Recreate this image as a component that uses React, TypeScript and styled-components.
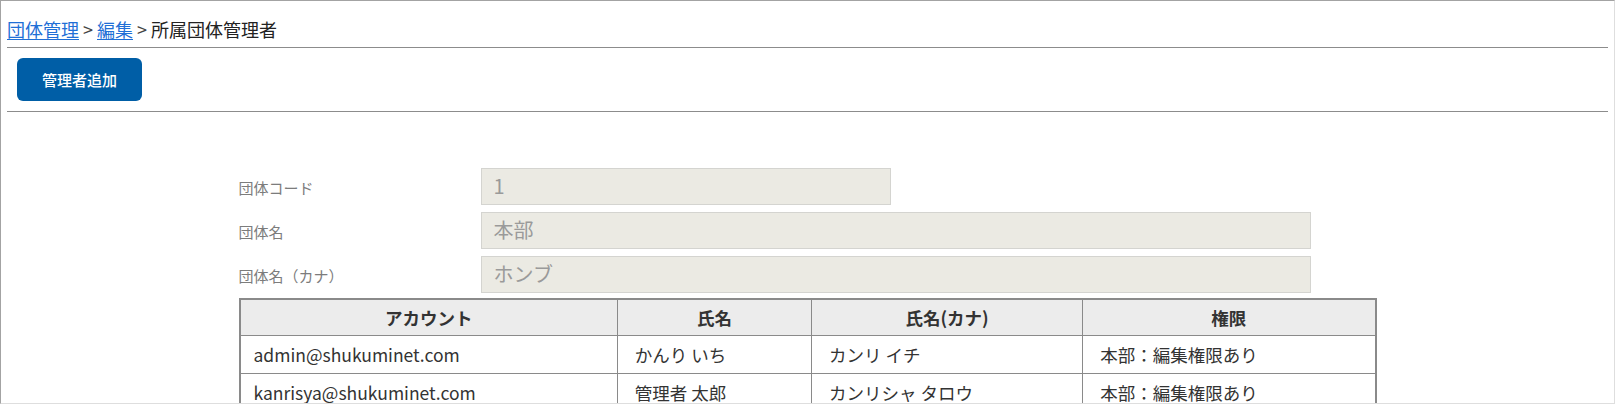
import styled, { createGlobalStyle } from "styled-components";

const GlobalStyle = createGlobalStyle`
    html, body {
        margin: 0;
        padding: 0;
        background: #ffffff;
    }
    body {
        font-family: "Noto Sans CJK JP", "Noto Sans", sans-serif;
        color: #333333;
    }
`;

const Frame = styled.div`
    box-sizing: border-box;
    width: 1615px;
    height: 404px;
    overflow: hidden;
    border-top: 1px solid #a3a3a3;
    border-left: 1px solid #a3a3a3;
    border-right: 1px solid #dedede;
    border-bottom: 1px solid #dedede;
    padding: 0 6px;
    display: flex;
    flex-direction: column;
`;

const Breadcrumb = styled.div`
    padding-top: 15px;
    padding-bottom: 5px;
    font-size: 18px;
    line-height: 26px;
    color: #222222;
    white-space: nowrap;
`;

const CrumbLink = styled.a`
    color: #1f6fd6;
    text-decoration: underline;
    text-underline-offset: 2px;
    cursor: pointer;
`;

const Separator = styled.span`
    margin: 0 4px;
    color: #444;
`;

const Toolbar = styled.div`
    border-top: 1px solid #8c8c8c;
    border-bottom: 1px solid #8c8c8c;
    padding: 10px 10px;
    display: flex;
    align-items: center;
`;

const Button = styled.button`
    box-sizing: border-box;
    width: 125px;
    height: 43px;
    border: none;
    border-radius: 6px;
    background-color: #005ea6;
    color: #ffffff;
    font-family: "Noto Sans CJK JP", sans-serif;
    font-size: 15px;
    font-weight: 500;
    cursor: pointer;
`;

const Content = styled.div`
    width: 1138px;
    margin: 56px auto 0;
    display: flex;
    flex-direction: column;
    gap: 7px;
`;

const FormRow = styled.div`
    display: grid;
    grid-template-columns: 242px 1fr;
    align-items: center;
`;

const Label = styled.label`
    font-size: 15px;
    color: #7c7c7c;
    padding-top: 2px;
`;

const Field = styled.div<{ $width: number }>`
    box-sizing: border-box;
    width: ${p => p.$width}px;
    height: 37px;
    background-color: #ebeae3;
    border: 1px solid #d4d4d0;
    padding: 0 12px 2px;
    display: flex;
    align-items: center;
    font-size: 20px;
    color: #9a9a9a;
`;

const Table = styled.table`
    margin-top: -2px;
    border-collapse: collapse;
    border: 2px solid #8a8a8a;
    table-layout: fixed;
`;

const Th = styled.th<{ $width: number }>`
    width: ${p => p.$width}px;
    height: 35px;
    background-color: #ececec;
    border: 1px solid #8a8a8a;
    font-size: 17.5px;
    font-weight: 700;
    color: #333;
    text-align: center;
    padding: 0;
`;

const Td = styled.td`
    height: 37px;
    border: 1px solid #8a8a8a;
    font-size: 17.5px;
    color: #333;
    padding: 0 17px;
    white-space: nowrap;

    &:first-child {
        padding-left: 13px;
    }
`;

const columns = [
    { title: "アカウント", width: 376 },
    { title: "氏名", width: 193 },
    { title: "氏名(カナ)", width: 270 },
    { title: "権限", width: 291 },
];

const admins = [
    ["admin@shukuminet.com", "かんり いち", "カンリ イチ", "本部：編集権限あり"],
    ["kanrisya@shukuminet.com", "管理者 太郎", "カンリシャ タロウ", "本部：編集権限あり"],
];

export default function App() {
    return (
        <>
            <GlobalStyle />
            <Frame>
                <Breadcrumb>
                    <CrumbLink>団体管理</CrumbLink>
                    <Separator>&gt;</Separator>
                    <CrumbLink>編集</CrumbLink>
                    <Separator>&gt;</Separator>
                    所属団体管理者
                </Breadcrumb>
                <Toolbar>
                    <Button>管理者追加</Button>
                </Toolbar>
                <Content>
                    <FormRow>
                        <Label>団体コード</Label>
                        <Field $width={410}>1</Field>
                    </FormRow>
                    <FormRow>
                        <Label>団体名</Label>
                        <Field $width={830}>本部</Field>
                    </FormRow>
                    <FormRow>
                        <Label>団体名（カナ）</Label>
                        <Field $width={830}>ホンブ</Field>
                    </FormRow>
                    <Table>
                        <thead>
                            <tr>
                                {columns.map(c => (
                                    <Th key={c.title} $width={c.width}>{c.title}</Th>
                                ))}
                            </tr>
                        </thead>
                        <tbody>
                            {admins.map(row => (
                                <tr key={row[0]}>
                                    {row.map((cell, i) => (
                                        <Td key={i}>{cell}</Td>
                                    ))}
                                </tr>
                            ))}
                        </tbody>
                    </Table>
                </Content>
            </Frame>
        </>
    );
}
